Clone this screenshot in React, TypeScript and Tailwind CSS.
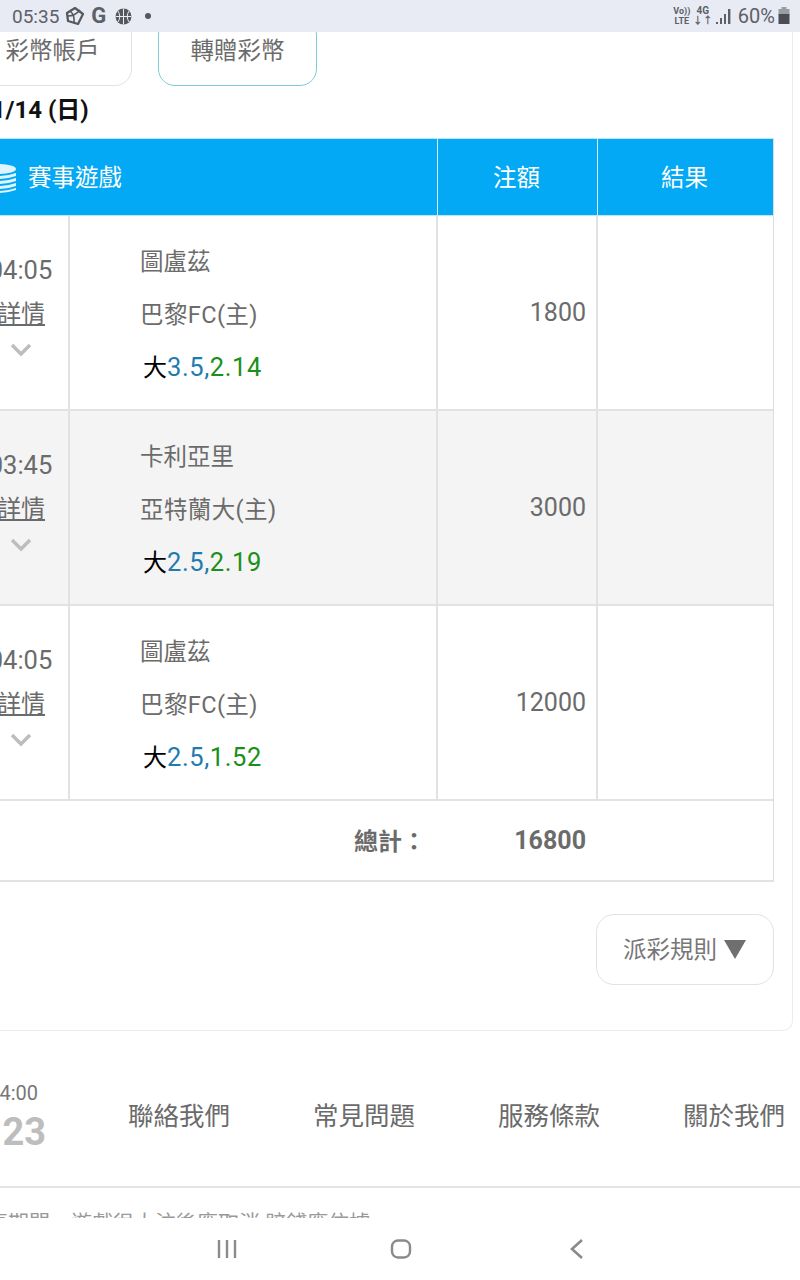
const rows = [
  { time: "04:05", away: "圖盧茲", home: "巴黎FC(主)", line: "3.5,", odds: "2.14", stake: "1800", alt: false },
  { time: "03:45", away: "卡利亞里", home: "亞特蘭大(主)", line: "2.5,", odds: "2.19", stake: "3000", alt: true },
  { time: "04:05", away: "圖盧茲", home: "巴黎FC(主)", line: "2.5,", odds: "1.52", stake: "12000", alt: false },
];

const footerLinks = ["聯絡我們", "常見問題", "服務條款", "關於我們"];

function StatusBar() {
  return (
    <div className="h-8 shrink-0 bg-[#e8ebf4] flex items-center justify-between pl-[12px] pr-[10px] text-[#5c6068] relative z-10">
      <div className="flex items-center">
        <span className="text-[19px] leading-none">05:35</span>
        <svg className="ml-[6px]" width="20" height="20" viewBox="0 0 20 20" fill="none" stroke="#55585e" strokeWidth="2.2" strokeLinejoin="round">
          <path d="M10 2 L18 8 L13 18 L3 15 L2 7 Z" />
          <path d="M5 5 Q10 9 9 17 M15 4 Q10 10 3 10" strokeWidth="1.6" />
        </svg>
        <span className="ml-[6px] w-[16px] text-[22px] leading-none font-bold">G</span>
        <svg className="ml-[8px]" width="17" height="17" viewBox="0 0 17 17">
          <circle cx="8.5" cy="8.5" r="8" fill="#55585e" />
          <path d="M8.5 0.5V16.5M0.5 8.5H16.5M3 3Q6.5 8.5 3 14M14 3Q10.5 8.5 14 14" stroke="#e8ebf4" strokeWidth="1" fill="none" />
        </svg>
        <span className="ml-[13px] w-[6px] h-[6px] rounded-full bg-[#55585e]" />
      </div>
      <div className="flex items-center">
        <div className="w-[16px] flex flex-col items-center text-[9px] leading-[10px] font-bold text-[#5c6068]">
          <span>Vo))</span>
          <span>LTE</span>
        </div>
        <div className="ml-[6px] w-[14px] flex flex-col items-center text-[10px] leading-[10px] font-bold">
          <span>4G</span>
          <span>↓↑</span>
        </div>
        <svg className="ml-[6px]" width="16" height="17" viewBox="0 0 16 17" fill="#5c6068">
          <rect x="0" y="14" width="2" height="2" />
          <rect x="4" y="10" width="2" height="6" />
          <rect x="8" y="6" width="2" height="10" />
          <rect x="12" y="1" width="2.4" height="15" />
        </svg>
        <span className="ml-[6px] text-[20px] leading-none">60%</span>
        <svg className="ml-[3px]" width="12" height="18" viewBox="0 0 12 18">
          <rect x="3.5" y="0" width="5" height="3" fill="#9a9da3" />
          <rect x="0.5" y="2" width="11" height="6" fill="#9a9da3" />
          <rect x="0.5" y="7" width="11" height="10" fill="#4a4d52" />
        </svg>
      </div>
    </div>
  );
}

function NavBar() {
  return (
    <div className="h-[62px] shrink-0 bg-white flex items-center relative z-10 pl-[217px]">
      <svg width="20" height="20" viewBox="0 0 20 20" stroke="#8a8a8a" strokeWidth="2.4" fill="none">
        <path d="M2 1V19M10 1V19M18 1V19" />
      </svg>
      <svg className="ml-[153px]" width="22" height="20" viewBox="0 0 22 20" stroke="#8a8a8a" strokeWidth="2.4" fill="none">
        <rect x="2" y="1.5" width="18" height="17" rx="6" />
      </svg>
      <svg className="ml-[157px]" width="16" height="22" viewBox="0 0 16 22" stroke="#8a8a8a" strokeWidth="2.6" fill="none">
        <path d="M13 2L3 11L13 20" />
      </svg>
    </div>
  );
}

function CoinsIcon() {
  return (
    <svg className="ml-[-18px] mr-[12px]" width="34" height="32" viewBox="0 0 34 32" fill="#dff4fe">
      <ellipse cx="17" cy="6" rx="17" ry="5" />
      <path d="M0 10Q17 16 34 10V13Q17 19 0 13Z" />
      <path d="M0 15Q17 21 34 15V18Q17 24 0 18Z" />
      <path d="M0 20Q17 26 34 20V23Q17 29 0 23Z" />
      <path d="M0 25Q17 31 34 25V27Q17 33 0 27Z" />
    </svg>
  );
}

export default function App() {
  return (
    <div
      className="w-[800px] h-[1280px] overflow-hidden flex flex-col bg-white text-[#6b6b6b]"
      style={{ fontFamily: 'Roboto, "Noto Sans CJK TC", sans-serif' }}
    >
      <StatusBar />
      <div className="flex-1 min-h-0 overflow-hidden">
        <div className="w-[827px] ml-[-27px] mt-[-14px]">
          <div className="w-[820px] border-r border-b border-[#ececec] rounded-br-[10px] pr-[18px] h-[1013px]">
            <div className="flex gap-[26px] text-[23.5px]">
              <div className="w-[159px] h-[68px] border border-[#e2e2e2] rounded-[17px] flex items-center justify-center">彩幣帳戶</div>
              <div className="w-[159px] h-[68px] border border-[#7fcbd9] rounded-[17px] flex items-center justify-center">轉贈彩幣</div>
            </div>
            <div className="h-[52px] flex items-center pl-[5px] pb-[4px] text-[24px] font-bold text-[#111]">01/14 (日)</div>

            <div className="border-r border-[#ddd]">
              <div className="grid grid-cols-[96px_368px_160px_176px] h-[78px] bg-[#03a9f4] text-white text-[23.5px] border-t border-b border-[#bfe6f8]">
                <div className="col-span-2 flex items-center pl-[27px] pt-[4px]">
                  <CoinsIcon />
                  <span>賽事遊戲</span>
                </div>
                <div className="border-l border-[#d5effc] flex items-center justify-center pt-[4px] pr-[2px]">注額</div>
                <div className="border-l border-[#d5effc] flex items-center justify-center pt-[4px] pr-[2px]">結果</div>
              </div>

              {rows.map((r, i) => (
                <div
                  key={i}
                  className={`grid grid-cols-[95px_368px_160px_177px] h-[195px] border-b-2 border-[#e2e2e2] ${r.alt ? "bg-[#f4f4f4]" : "bg-white"}`}
                >
                  <div className="flex flex-col items-center pt-[37px]">
                    <span className="text-[25.5px] leading-[34px]">{r.time}</span>
                    <a className="text-[24px] underline leading-[34px] mt-[10px] ml-[1px]">詳情</a>
                    <svg className="mt-[12px] ml-[1px]" width="22" height="14" viewBox="0 0 22 14" fill="none" stroke="#bdbdbd" strokeWidth="3.4">
                      <path d="M2 2L11 11L20 2" />
                    </svg>
                  </div>
                  <div className="border-l-2 border-[#e2e2e2] pl-[70px] pt-[20px] text-[23.5px] leading-[52.5px]">
                    <div>{r.away}</div>
                    <div className="tracking-[0.4px]">{r.home}</div>
                    <div className="pl-[3px] text-[25.5px] tracking-[0.6px]">
                      <span className="text-black text-[24px] tracking-normal">大</span>
                      <span className="text-[#1f7bb0]">{r.line}</span>
                      <span className="text-[#1a8f1a]">{r.odds}</span>
                    </div>
                  </div>
                  <div className="border-l-2 border-[#e2e2e2] flex items-center justify-end pr-[10px] text-[25px]">{r.stake}</div>
                  <div className="border-l-2 border-[#e2e2e2]" />
                </div>
              ))}

              <div className="grid grid-cols-[96px_368px_160px_176px] h-[81px] border-b-2 border-[#e2e2e2] font-bold">
                <div className="col-span-2 flex items-center justify-end pr-[11px] pt-[3px] text-[24px]">總計：</div>
                <div className="flex items-center justify-end pr-[11px] text-[25px]">16800</div>
                <div />
              </div>
            </div>

            <div className="flex justify-end mt-[32px]">
              <div className="w-[178px] h-[71px] border border-[#e2e2e2] rounded-[18px] flex items-center justify-center gap-[6px] text-[23.5px] text-[#777]">
                <span className="pt-[2px]">派彩規則</span>
                <svg className="mb-[2px]" width="24" height="20" viewBox="0 0 24 20" fill="#6f6f6f">
                  <path d="M1 1H23L12 20Z" />
                </svg>
              </div>
            </div>
          </div>

          <div className="h-[157px] border-b-2 border-[#e4e4e4] flex items-center pt-[16px]">
            <div className="w-[72px] flex flex-col items-end">
              <span className="text-[20px] leading-[28px] text-[#777] mr-[7px]">24:00</span>
              <span className="text-[38px] leading-[46px] font-bold text-[#bdbdbd] mr-[-1px] mt-[2px]">0123</span>
            </div>
            <div className="ml-[83px] flex gap-[83px] text-[25.5px] text-[#6b6b6b] whitespace-nowrap">
              {footerLinks.map((l) => (
                <span key={l}>{l}</span>
              ))}
            </div>
          </div>
          <div className="ml-[-7px] pt-[20px] text-[21px] leading-[30px] text-[#999] whitespace-nowrap">
            賽事期間，遊戲很大注後應取消 賠錢應依據
          </div>
        </div>
      </div>
      <NavBar />
    </div>
  );
}
